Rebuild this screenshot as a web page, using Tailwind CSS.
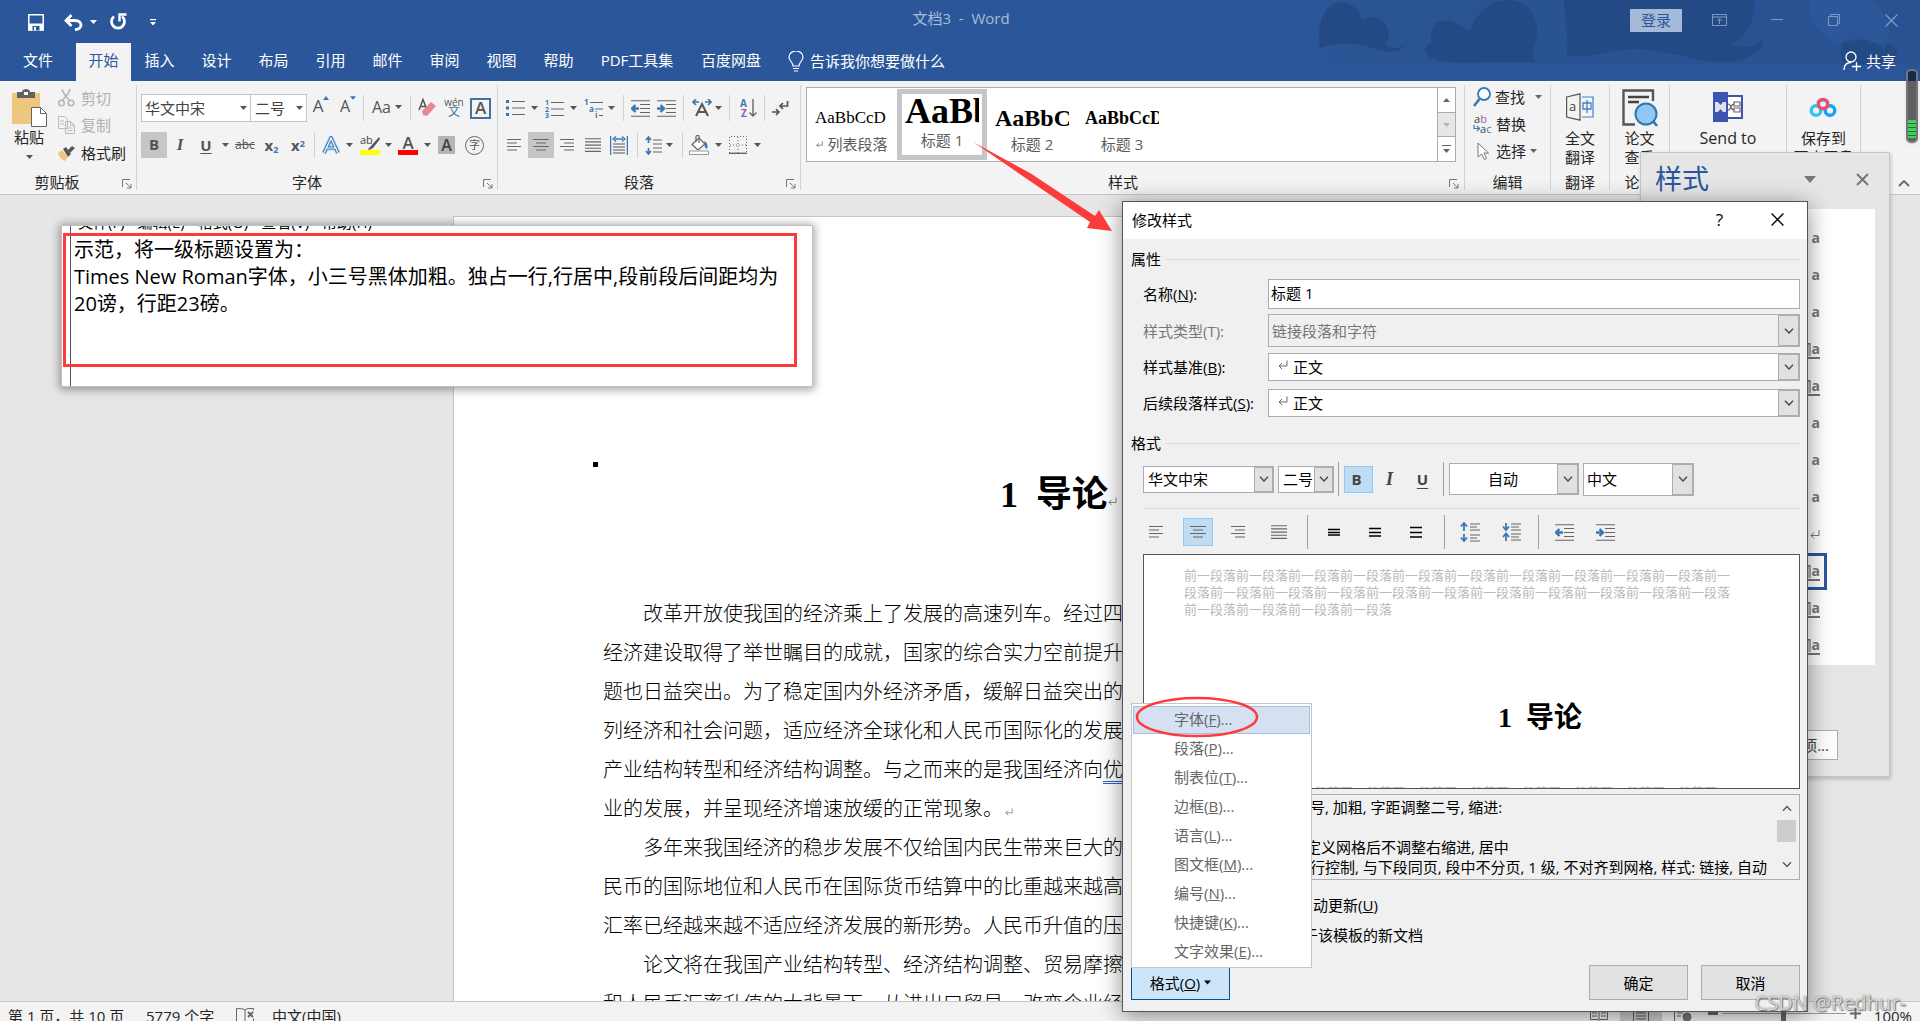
<!DOCTYPE html>
<html lang="zh-CN">
<head>
<meta charset="utf-8">
<title>文档3 - Word</title>
<script src="https://cdn.jsdelivr.net/npm/@tailwindcss/browser@4"></script>
</head>
<body class="relative h-screen overflow-hidden flex flex-col bg-[#e6e6e6] text-[15px] leading-5 text-[#262626] font-['Open_Sans','Noto_Sans_CJK_SC',sans-serif]">

<svg class="hidden">
  <defs>
    <symbol id="caret" viewBox="0 0 7 4"><path d="M0 0h7L3.5 4z" fill="currentColor"/></symbol>
    <symbol id="chev" viewBox="0 0 10 6"><path d="M1 .7 5 5 9 .7" fill="none" stroke="currentColor" stroke-width="1.3"/></symbol>
    <symbol id="launch" viewBox="0 0 10 10"><path d="M.5 8V.5H8M4 4l5 5M9 5v4H5" fill="none" stroke="#777" stroke-width="1"/></symbol>
    <symbol id="close" viewBox="0 0 12 12"><path d="m.5.5 11 11M11.500.5l-11 11" fill="none" stroke="currentColor" stroke-width="1.2"/></symbol>
    <symbol id="left" viewBox="0 0 16 14"><path d="M0 1.500h14M0 5h10M0 8.500h14M0 12h10" stroke="#666" stroke-width="1.2"/></symbol>
    <symbol id="center" viewBox="0 0 16 14"><path d="M0 1.500h16M3 5h10M0 8.500h16M3 12h10" stroke="#666" stroke-width="1.2"/></symbol>
    <symbol id="right" viewBox="0 0 16 14"><path d="M1 1.500h14M5 5h10M1 8.500h14M5 12h10" stroke="#666" stroke-width="1.2"/></symbol>
    <symbol id="justify" viewBox="0 0 16 14"><path d="M0 .7h16M0 3.900h16M0 7.100h16M0 10.300h16M0 13.400h16" stroke="#666" stroke-width="1.1"/></symbol>
    <symbol id="outdent" viewBox="0 0 19 17"><path d="M0 .7h19M9 4.500h10M9 8.500h10M9 12.500h10M0 16.300h19" stroke="#666" stroke-width="1.1"/><path d="M8 8.500H1M4.500 5 1 8.500 4.500 12" fill="none" stroke="#3a78b5" stroke-width="2.4"/></symbol>
    <symbol id="indent" viewBox="0 0 19 17"><path d="M0 .7h19M9 4.500h10M9 8.500h10M9 12.500h10M0 16.300h19" stroke="#666" stroke-width="1.1"/><path d="M0 8.500h7M3.500 5 7 8.500 3.500 12" fill="none" stroke="#3a78b5" stroke-width="2.4"/></symbol>
    <symbol id="ret" viewBox="0 0 10 9"><path d="M9 0v5.500H1M4 2.500l-3 3 3 3" fill="none" stroke="currentColor" stroke-width="1"/></symbol>
  </defs>
</svg>

<!-- Title bar and ribbon tabs -->
<header class="relative shrink-0 h-[81px] bg-[#2b579a] text-white flex flex-col">
  <svg class="absolute right-0 top-0" width="640" height="66" viewBox="0 0 640 66" aria-hidden="true">
    <defs><linearGradient id="fade"><stop offset="0" stop-color="#2a5494" stop-opacity="0"/><stop offset=".12" stop-color="#2a5494"/><stop offset="1" stop-color="#2a5191"/></linearGradient></defs>
    <rect width="640" height="65" fill="url(#fade)"/>
    <g fill="#244a85">
      <path d="M40 48c-4-28 6-44 20-46 14 0 20 10 22 18 10-6 22-2 26 10 2 8-1 12-3 14 8 6 18 4 20 0-2 8-14 10-26 6-20-8-42-8-59-2z"/>
      <path d="M152 42c-6-14 6-26 22-20 8 4 10 8 16 8 6-16 20-30 38-30 22 0 34 22 28 40-4 12-4 18 0 22h-44c-20 0-46 4-64-6-6-6-2-10 4-14z"/>
      <path d="M284 0h190c2 20-8 36-22 44 14 8 28 0 30-6 4 10-12 24-40 24-34 0-70-22-122-8-16 4-26 0-34 2 4-16-2-36-2-56z"/>
      <path d="M561 54c-2-14 8-22 18-22 8 4 8 12 12 12 12-4 26-2 26 10l-4 10h-50z"/>
    </g>
    <path d="M530 0h60c20 14 24 34 14 50-10-14-28-12-44-6-20-8-34-22-30-44z" fill="#2f5c9f" opacity=".6"/>
  </svg>
  <div class="relative h-10 flex items-center pl-7 pr-[22px]">
    <div class="flex flex-1 items-center pt-1">
      <button aria-label="保存" class="w-9"><svg width="16" height="17" viewBox="0 0 16 17" fill="none" stroke="#fff" stroke-width="1.500"><path d="M.8.8h14.400v15.200H.8z"/><path d="M1 9.500h14v7H1z" fill="#fff" stroke="none"/><path d="M4.500 12h7v4.500h-7z" fill="#2b579a" stroke="none"/><path d="M6 13h2v3.500H6z" fill="#fff" stroke="none"/></svg></button>
      <button aria-label="撤消" class="w-[26px]"><svg width="19" height="17" viewBox="0 0 19 17" fill="none" stroke="#fff" stroke-width="2.800"><path d="M2 6.500h9c8 0 8 9 0 9M7.500 1 2 6.500l5.500 5.500"/></svg></button>
      <svg width="7" height="4"><use href="#caret"/></svg>
      <button aria-label="重复" class="ml-3 w-10"><svg width="18" height="18" viewBox="0 0 18 18" fill="none" stroke="#fff" stroke-width="2.800"><path d="M5 3.500a6.500 6.500 0 1 0 8 0"/><path d="M10.500 8.500V1.500h7" stroke-width="2.400"/></svg></button>
      <svg width="8" height="7" viewBox="0 0 8 7"><path d="M1 .6h6" stroke="#fff" stroke-width="1.200"/><path d="M1 3h6L4 6.500z" fill="#fff"/></svg>
    </div>
    <h1 class="text-[#a9bcd9] text-[15px] pb-1 pr-1 whitespace-pre">文档3  -  Word</h1>
    <div class="flex flex-1 items-center justify-end text-[#7d99c6]">
      <button class="w-[52px] h-[23px] bg-[#a5b9d8] text-[#2b579a] rounded-[1px] leading-[22px]">登录</button>
      <button aria-label="功能区显示选项" class="ml-[30px] w-[59px]"><svg width="15" height="12" viewBox="0 0 15 12" fill="none" stroke="currentColor"><path d="M.5.5h14v11H.5zM.5 3h14M7.500 10V5M5 7.200l2.500-2.500L10 7.200"/></svg></button>
      <button aria-label="最小化" class="w-[57px]"><svg width="12" height="12"><path d="M0 5.500h12" stroke="currentColor"/></svg></button>
      <button aria-label="向下还原" class="w-[57px]"><svg width="12" height="12" viewBox="0 0 12 12" fill="none" stroke="currentColor"><path d="M.5 2.500h9v9h-9zM2.500 2.500v-2h9v9h-2"/></svg></button>
      <button aria-label="关闭"><svg width="13" height="13"><use href="#close"/></svg></button>
    </div>
  </div>
  <nav class="relative flex h-[41px] items-end text-center leading-[34px]">
    <a href="#" class="w-[76px] h-[38px]">文件</a>
    <a href="#" class="w-[55px] h-[38px] bg-[#f3f3f3] text-[#2b579a]">开始</a>
    <a href="#" class="w-[57px] h-[38px]">插入</a>
    <a href="#" class="w-[57px] h-[38px]">设计</a>
    <a href="#" class="w-[57px] h-[38px]">布局</a>
    <a href="#" class="w-[57px] h-[38px]">引用</a>
    <a href="#" class="w-[57px] h-[38px]">邮件</a>
    <a href="#" class="w-[57px] h-[38px]">审阅</a>
    <a href="#" class="w-[57px] h-[38px]">视图</a>
    <a href="#" class="w-[57px] h-[38px]">帮助</a>
    <a href="#" class="w-[100px] h-[38px]">PDF工具集</a>
    <a href="#" class="w-[88px] h-[38px]">百度网盘</a>
    <a href="#" class="flex h-[38px] leading-9 pl-[13px]">
      <svg class="mt-2 mr-1.5" width="16" height="21" viewBox="0 0 16 21" fill="none" stroke="#fff" stroke-width="1.200"><path d="M5 15c0-4-4-5-4-9a7 6 0 0 1 14 0c0 4-4 5-4 9zM5 17.500h6M6 20h4"/></svg>告诉我你想要做什么</a>
    <a href="#" class="ml-auto mr-6 flex h-[38px] leading-9"><svg class="mt-2 mr-1" width="19" height="20" viewBox="0 0 19 20" fill="none" stroke="#fff" stroke-width="1.300"><circle cx="8" cy="6" r="5"/><path d="M1 19c0-5 2-7.500 7-7.500M13.500 11v9M9 15.500h9"/></svg>共享</a>
  </nav>
</header>

<!-- Ribbon -->
<section class="shrink-0 h-[114px] bg-[#f3f3f3] border-b border-[#c8c8c8] py-1 flex">
  <!-- Clipboard -->
  <div class="w-[137px] border-r border-[#d2d2d2] flex flex-col">
    <div class="flex flex-1">
      <button class="w-[58px] flex flex-col items-center pt-1">
        <svg width="35" height="38" viewBox="0 0 35 38"><path d="M0 4h28v31H0z" fill="#eec77f"/><path d="M5 3h5c0-4 8-4 8 0h5v6H5z" fill="#636363"/><path d="M12 3h4v3h-4z" fill="#fff"/><path d="M19.500 18.500h9l6 6v13h-15z" fill="#fff" stroke="#666"/><path d="M28.500 18.500v6h6" fill="none" stroke="#666"/></svg>
        <span>粘贴</span>
        <svg class="mt-2 text-[#555]" width="7" height="4"><use href="#caret"/></svg>
      </button>
      <div class="flex flex-col text-[#b1b1b1] leading-6">
        <button class="flex h-[26px] items-center pb-px"><svg class="mr-1.5" width="17" height="18" viewBox="0 0 17 18" fill="none" stroke="#b5b5b5" stroke-width="1.600"><path d="M4 0c1 5 5 8 8 12M12 0c-1 5-5 8-8 12"/><circle cx="3.500" cy="14" r="2.800"/><circle cx="13" cy="14" r="2.800"/></svg>剪切</button>
        <button class="flex h-7 items-center"><svg class="mr-1.5" width="17" height="18" viewBox="0 0 17 18" fill="#f3f3f3" stroke="#bbb"><path d="M.5.5h6l3 3v9h-9zM7.500 5.500h5l4 4v8h-9zM12.500 5.500v4h4M2 5h4M2 8h4M9.500 12h5M9.500 14.500h5"/></svg>复制</button>
        <button class="flex h-7 items-center text-[#262626]"><svg class="mr-1.5" width="17" height="16" viewBox="0 0 17 16"><path d="M0 8l4-3 6 7-3 4c-3-1-6-4-7-8z" fill="#eec77f"/><path d="M5 4l3-2 5 7-3 3z" fill="#555"/><path d="M10 5l4-4 3 2-5 5z" fill="#555"/></svg>格式刷</button>
      </div>
    </div>
    <div class="relative h-4 leading-4 pr-[22px] text-center">剪贴板<svg class="absolute right-1 top-[5px]" width="10" height="10"><use href="#launch"/></svg></div>
  </div>

  <!-- Font -->
  <div class="w-[361px] border-r border-[#d2d2d2] flex flex-col pl-1 pt-[9px] text-[#555]">
    <div class="flex h-7 items-center">
      <label class="relative w-[110px] h-7 block"><select aria-label="字体" class="appearance-none w-full h-full border border-[#c6c6c6] bg-white pl-[3px] text-[#444] leading-6"><option>华文中宋</option></select><svg class="absolute right-1 top-3 pointer-events-none" width="7" height="4"><use href="#caret"/></svg></label>
      <label class="relative w-14 h-7 block"><select aria-label="字号" class="appearance-none w-full h-full border border-l-0 border-[#c6c6c6] bg-white pl-1 text-[#444] leading-6"><option>二号</option></select><svg class="absolute right-1 top-3 pointer-events-none" width="7" height="4"><use href="#caret"/></svg></label>
      <button class="w-7 flex justify-center text-[17px] pb-1">A<svg width="6" height="4" viewBox="0 0 6 4"><path d="M0 4h6L3 0z" fill="#3a78b5"/></svg></button>
      <button class="w-[26px] flex justify-center text-[16px] pb-1">A<svg width="6" height="4"><use href="#caret" color="#3a78b5"/></svg></button>
      <span class="w-px h-[26px] ml-0.5 bg-[#d2d2d2]"></span>
      <button class="w-[46px] flex justify-center items-center gap-1 text-[16px] pb-0.5">Aa<svg width="7" height="4"><use href="#caret"/></svg></button>
      <span class="w-px h-[26px] mr-[7px] bg-[#d2d2d2]"></span>
      <button aria-label="清除格式" class="w-6"><svg width="19" height="20" viewBox="0 0 19 20"><path d="M1 12 5 1.500 9 12M2.500 8.500h5" fill="none" stroke="#555" stroke-width="1.500"/><path d="M4 13 13 4l5 4-9 10-4-1z" fill="#e88594"/></svg></button>
      <button class="w-6 flex flex-col items-center text-[10px] leading-[8px]">wén<span class="text-[12px] leading-3 text-[#3a78b5]">文</span></button>
      <button class="ml-1 w-[21px] h-[21px] border-2 border-[#44729f] text-[17px] leading-[16px] font-semibold">A</button>
    </div>
    <div class="flex h-[26px] mt-2.5 items-center">
      <button class="w-[26px] h-full bg-[#c6c6c6] font-bold leading-6 pb-0.5">B</button>
      <button class="w-[26px] italic font-bold text-[17px] font-['Liberation_Serif']">I</button>
      <button class="w-[26px] font-bold underline underline-offset-2">U</button>
      <svg class="mx-[3px]" width="7" height="4"><use href="#caret"/></svg>
      <button class="w-[26px] line-through text-[12px]">abc</button>
      <button class="w-[27px] font-bold">x<sub class="text-[9px] text-[#3a78b5]">2</sub></button>
      <button class="w-[26px] font-bold">x<sup class="text-[9px] text-[#3a78b5]">2</sup></button>
      <span class="w-px h-[26px] ml-[3px] mr-[3px] bg-[#d2d2d2]"></span>
      <button aria-label="文本效果" class="w-[26px] flex justify-center"><svg width="18" height="19" viewBox="0 0 18 19" fill="none"><path d="M2 17 9 2l7 15M5 12h8" stroke="#a9cdf0" stroke-width="5"/><path d="M2 17 9 2l7 15M5 12h8" stroke="#3a78b5" stroke-width="3.200"/><path d="M2 17 9 2l7 15M5 12h8" stroke="#fff" stroke-width="1.200"/></svg></button>
      <svg class="ml-0.5 mr-1" width="7" height="4"><use href="#caret"/></svg>
      <button aria-label="突出显示" class="w-[25px] flex justify-center"><svg width="20" height="20" viewBox="0 0 20 20"><text x="0" y="9" font-size="11" fill="#444">ab</text><path d="m19 2-8 9-3 3 1 1 4-2 7-9z" fill="#555"/><path d="M0 15h20v5H0z" fill="#ff0"/></svg></button>
      <svg class="mx-[3px]" width="7" height="4"><use href="#caret"/></svg>
      <button class="w-[26px] flex flex-col items-center text-[17px] leading-[15px] font-semibold">A<span class="w-5 h-[5px] bg-[#f00]"></span></button>
      <svg class="mx-[3px]" width="7" height="4"><use href="#caret"/></svg>
      <button class="ml-1 w-[17px] h-[18px] bg-[#b5b5b5] text-[16px] leading-4 font-semibold text-[#444]">A</button>
      <button class="ml-2.5 w-[19px] h-[19px] rounded-full border border-[#666] text-[11px] leading-4">字</button>
    </div>
    <div class="relative mt-auto h-4 leading-4 pr-6 text-center text-[#262626]">字体<svg class="absolute right-1 top-[5px]" width="10" height="10"><use href="#launch"/></svg></div>
  </div>

  <!-- Paragraph -->
  <div class="w-[303px] border-r border-[#d2d2d2] flex flex-col pl-1 pt-[9px] text-[#555]">
    <div class="flex h-7 items-center">
      <button aria-label="项目符号" class="w-[26px] flex justify-center"><svg width="19" height="18" viewBox="0 0 19 18"><path d="M0 1h3v3H0zM0 7.500h3v3H0zM0 14h3v3H0z" fill="#3a78b5"/><path d="M6 2.500h13M6 9h13M6 15.500h13" stroke="#666" stroke-width="1.200"/></svg></button>
      <svg class="mx-[3px]" width="7" height="4"><use href="#caret"/></svg>
      <button aria-label="编号" class="w-[26px] flex justify-center"><svg width="19" height="19" viewBox="0 0 19 19"><g font-size="7" font-weight="bold" fill="#3a78b5"><text y="6">1</text><text y="12.500">2</text><text y="19">3</text></g><path d="M6 3.500h13M6 10h13M6 16.500h13" stroke="#666" stroke-width="1.200"/></svg></button>
      <svg class="mx-[3px]" width="7" height="4"><use href="#caret"/></svg>
      <button aria-label="多级列表" class="w-[26px] flex justify-center"><svg width="19" height="19" viewBox="0 0 19 19"><g font-size="8" font-weight="bold" fill="#3a78b5"><text y="6">1</text><text x="5" y="12.500">a</text><text x="11" y="19">i</text></g><path d="M6 3.500h13M11 10h8M15 16.500h4" stroke="#666" stroke-width="1.200"/></svg></button>
      <svg class="ml-0.5" width="7" height="4"><use href="#caret"/></svg>
      <span class="w-px h-[26px] ml-2 mr-[3px] bg-[#d2d2d2]"></span>
      <button aria-label="减少缩进" class="w-[26px] flex justify-center"><svg width="19" height="17"><use href="#outdent"/></svg></button>
      <button aria-label="增加缩进" class="w-[26px] flex justify-center"><svg width="19" height="17"><use href="#indent"/></svg></button>
      <span class="w-px h-[26px] ml-1 mr-[5px] bg-[#d2d2d2]"></span>
      <button aria-label="中文版式" class="w-[26px] flex justify-center"><svg width="20" height="18" viewBox="0 0 20 18" fill="none"><path d="M4 17 10 5l6 12M6.500 13h7" stroke="#555" stroke-width="2"/><path d="M7 3H1M4 0 1 3l3 3M13 3h6M16 0l3 3-3 3" stroke="#3a78b5" stroke-width="1.600"/></svg></button>
      <svg width="7" height="4"><use href="#caret"/></svg>
      <span class="w-px h-[26px] ml-[7px] mr-[5px] bg-[#d2d2d2]"></span>
      <button aria-label="排序" class="w-[26px] flex justify-center"><svg width="17" height="20" viewBox="0 0 17 20"><g font-size="10" font-weight="bold"><text x="0" y="9" fill="#3a78b5">A</text><text x="1" y="19" fill="#9160ad">Z</text></g><path d="M13 1v17M9.500 14.500 13 18l3.500-3.500" fill="none" stroke="#666" stroke-width="1.400"/></svg></button>
      <span class="w-px h-[26px] ml-[3px] mr-0.5 bg-[#d2d2d2]"></span>
      <button aria-label="显示编辑标记" class="w-[26px] flex justify-center"><svg width="17" height="15" viewBox="0 0 17 15" fill="none" stroke="#555" stroke-width="1.700"><path d="M15.500 0v5H8M11 2 8 5l3 3M0 11h7M4 8l3 3-3 3"/></svg></button>
    </div>
    <div class="flex h-[26px] mt-2.5 items-center">
      <button aria-label="左对齐" class="w-[26px] h-full flex items-center justify-center"><svg width="16" height="14"><use href="#left"/></svg></button>
      <button aria-label="居中" class="w-[26px] h-full flex items-center justify-center bg-[#c6c6c6]"><svg width="16" height="14"><use href="#center"/></svg></button>
      <button aria-label="右对齐" class="w-[26px] h-full flex items-center justify-center"><svg width="16" height="14"><use href="#right"/></svg></button>
      <button aria-label="两端对齐" class="w-[26px] h-full flex items-center justify-center"><svg width="16" height="14"><use href="#justify"/></svg></button>
      <button aria-label="分散对齐" class="w-[26px] h-full flex items-center justify-center"><svg width="18" height="19" viewBox="0 0 18 19" fill="none"><path d="M.6 0v19M17.400 0v19M5 3h8M6 .5 3 3l3 2.500M12 .5 15 3l-3 2.500" stroke="#3a78b5" stroke-width="1.300"/><path d="M3 8h12M3 11h12M3 14h12M3 17h12" stroke="#555" stroke-width="1.200"/></svg></button>
      <span class="w-px h-[26px] ml-[5px] mr-0.5 bg-[#d2d2d2]"></span>
      <button aria-label="行距" class="w-[26px] flex justify-center"><svg width="17" height="19" viewBox="0 0 17 19" fill="none"><path d="M3.500 1v6M1 4l2.500-3L6 4M3.500 18v-6M1 15l2.500 3L6 15" stroke="#3a78b5" stroke-width="1.700"/><path d="M8 4h9M8 8h9M8 12h9M8 16h9" stroke="#666" stroke-width="1.200"/></svg></button>
      <svg width="7" height="4"><use href="#caret"/></svg>
      <span class="w-px h-[26px] ml-[9px] mr-[3px] bg-[#d2d2d2]"></span>
      <button aria-label="底纹" class="w-[26px] flex justify-center"><svg width="20" height="20" viewBox="0 0 20 20" fill="none"><path d="M3 9.500 10 3l6 6-7 6z" fill="#fff" stroke="#666" stroke-width="1.200"/><path d="M7 7V1.500c0-1.500 3-1.500 3 0V8" stroke="#666" stroke-width="1.200"/><path d="M15 6c4 2 4 5 3 8-2-1-3-3-2-5z" fill="#3a78b5"/><path d="M.5 16h19v3.500H.5z" fill="#fff" stroke="#999"/></svg></button>
      <svg class="mx-[3px]" width="7" height="4"><use href="#caret"/></svg>
      <button aria-label="边框" class="w-[26px] flex justify-center"><svg width="18" height="18" viewBox="0 0 18 18" fill="none" stroke="#666"><path d="M.5 17V.5h17V17M9 1v16M1 9h16" stroke-dasharray="1 2"/><path d="M0 17.300h18" stroke-width="1.400"/></svg></button>
      <svg class="mx-[3px]" width="7" height="4"><use href="#caret"/></svg>
    </div>
    <div class="relative mt-auto h-4 leading-4 pr-6 text-center text-[#262626]">段落<svg class="absolute right-1 top-[5px]" width="10" height="10"><use href="#launch"/></svg></div>
  </div>

  <!-- Styles gallery -->
  <div class="flex-1 border-r border-[#d2d2d2] flex flex-col pl-[5px] pr-2 pt-0.5">
    <div class="h-[75px] border border-[#ababab] bg-white flex">
      <div class="flex flex-1 items-stretch pt-px text-[#5c5c5c] text-center">
        <button class="w-[90px] px-2 h-[71px] flex flex-col justify-end pb-1.5"><span class="w-full overflow-hidden whitespace-nowrap text-left text-[17px] leading-7 text-black font-['Liberation_Serif']">AaBbCcD</span><span class="w-full mt-0.5 flex items-center justify-center gap-1"><svg width="7" height="7"><use href="#ret"/></svg>列表段落</span></button>
        <button class="w-[90px] h-[71px] border-5 border-[#c6c6c6] flex flex-col px-[3px]"><span class="w-full overflow-hidden whitespace-nowrap text-left text-[36px] leading-[34px] text-black font-bold font-['Liberation_Serif']">AaBbC</span><span class="w-full mt-0.5">标题 1</span></button>
        <button class="w-[90px] px-2 h-[71px] flex flex-col justify-end pb-1.5"><span class="w-full overflow-hidden whitespace-nowrap text-left text-[24px] leading-7 text-black font-bold font-['Liberation_Serif']">AaBbCc</span><span class="w-full mt-0.5">标题 2</span></button>
        <button class="w-[90px] px-2 h-[71px] flex flex-col justify-end pb-1.5"><span class="w-full overflow-hidden whitespace-nowrap text-left text-[18px] leading-7 text-black font-bold font-['Liberation_Serif']">AaBbCcD</span><span class="w-full mt-0.5">标题 3</span></button>
      </div>
      <div class="w-[18px] border-l border-[#ababab] flex flex-col text-[#666]">
        <button aria-label="上一行" class="flex-1 flex items-center justify-center"><svg class="rotate-180" width="7" height="4"><use href="#caret"/></svg></button>
        <button aria-label="下一行" class="flex-1 flex items-center justify-center bg-[#e6e6e6] border-y border-[#ababab] text-[#b5b5b5]"><svg width="7" height="4"><use href="#caret"/></svg></button>
        <button aria-label="其他" class="flex-1 flex flex-col items-center justify-center gap-[3px]"><span class="w-[9px] h-px bg-[#666]"></span><svg width="7" height="4"><use href="#caret"/></svg></button>
      </div>
    </div>
    <div class="relative mt-auto h-4 leading-4 pr-4 text-center">样式<svg class="absolute right-[-3px] top-[5px]" width="10" height="10"><use href="#launch"/></svg></div>
  </div>

  <!-- Editing -->
  <div class="w-[86px] border-r border-[#d2d2d2] flex flex-col pl-2">
    <button class="flex h-[25px] items-center pb-px"><svg class="mr-1" width="18" height="20" viewBox="0 0 18 20" fill="none" stroke="#3a78b5"><circle cx="11" cy="7" r="6" stroke-width="1.800" fill="#fff"/><path d="M6.500 12 1 19" stroke-width="2.600"/></svg>查找<svg class="ml-2.5 text-[#666]" width="7" height="4"><use href="#caret"/></svg></button>
    <button class="flex h-7 items-center"><svg class="mr-1" width="19" height="20" viewBox="0 0 19 20" font-size="11"><text x="1" y="9" fill="#444">a<tspan fill="#9160ad">b</tspan></text><text x="7" y="19" fill="#444">a<tspan fill="#3a78b5">c</tspan></text><path d="M1 11v3.500h5M4 12l2.500 2.500L4 17" fill="none" stroke="#3a78b5" stroke-width="1.200"/></svg>替换</button>
    <button class="flex h-[26px] items-center"><svg class="ml-1 mr-1.5" width="13" height="18" viewBox="0 0 13 18"><path d="M1 1v14l3.500-3 3 5.500 2-1-2.500-5.500h4.500z" fill="#fff" stroke="#777"/></svg>选择<svg class="ml-1 text-[#666]" width="7" height="4"><use href="#caret"/></svg></button>
    <div class="mt-auto h-4 leading-4 pr-2 text-center">编辑</div>
  </div>

  <!-- Translate -->
  <div class="w-[59px] border-r border-[#d2d2d2] flex flex-col items-center">
    <button class="flex flex-col items-center pt-2 leading-[19px]"><svg class="mb-2" width="28" height="28" viewBox="0 0 28 28" fill="none"><path d="M.6 4 14 .8v26.400L.6 24z" stroke="#555" stroke-width="1.200"/><text x="3" y="18" font-size="13" fill="#444">a</text><path d="M16 4h11v20H16" stroke="#3f80d0" stroke-width="1.200"/><path d="M17 10h8v6h-8zM21 7v13" stroke="#3f80d0" stroke-width="1.300"/></svg>全文<span>翻译</span></button>
    <div class="mt-auto h-4 leading-4">翻译</div>
  </div>

  <!-- Paper check -->
  <div class="w-[60px] border-r border-[#d2d2d2] flex flex-col items-center">
    <button class="flex flex-col items-center pt-1 leading-[19px]"><svg class="mb-0.5" width="36" height="38" viewBox="0 0 36 38" fill="none"><path d="M31 12V1.500H1.500v34H13" stroke="#555" stroke-width="2.400"/><path d="M6 8h21M6 13h11" stroke="#444" stroke-width="2.600"/><circle cx="24" cy="25" r="10.500" fill="#93c6f4" stroke="#287aa8" stroke-width="2"/><path d="m31 32 4 5" stroke="#287aa8" stroke-width="2.600"/></svg>论文<span>查重</span></button>
    <div class="mt-auto h-4 leading-4">论文</div>
  </div>

  <!-- Send to -->
  <div class="w-[117px] border-r border-[#d2d2d2] flex flex-col items-center">
    <button class="flex flex-col items-center pt-[7px] leading-[19px]"><svg class="mb-[7px]" width="30" height="30" viewBox="0 0 30 30" fill="none"><path d="M14 4h15v22H14z" fill="#fff" stroke="#3d55b0" stroke-width="2"/><path d="M0 0h15v30H0z" fill="#3d55b0"/><path d="M2 10h3l2.500 3L10 10h3v10h-3l-2.500-3L5 20H2z" fill="#dfe2ee"/><path d="M15 12c4 0 2 6 6 6M15 18c4 0 2-6 6-6M21 10h6v4h-6zM21 16h6v4h-6z" stroke="#666" stroke-width="1.200"/></svg><span class="text-[16px]">Send to</span><span>iMindMap</span></button>
  </div>

  <!-- Cloud drive -->
  <div class="w-[74px] border-r border-[#d2d2d2] flex flex-col items-center">
    <button class="flex flex-col items-center pt-[11px] leading-[19px]"><svg class="mb-3" width="28" height="21" viewBox="0 0 28 21" fill="none" stroke-width="3.400"><circle cx="7" cy="14.500" r="4.800" stroke="#2bc4f5"/><circle cx="21" cy="14.500" r="4.800" stroke="#12a4f8"/><path d="M9 7a5.500 5.500 0 0 1 10 0" stroke="#2bbdf5"/><circle cx="14" cy="8" r="4.600" stroke="#f24d6c"/></svg>保存到<span>百度网盘</span></button>
  </div>
  <div class="w-[59px] flex items-end pl-[37px] pb-[3px]"><button aria-label="折叠功能区"><svg class="rotate-180 text-[#666]" width="12" height="8" viewBox="0 0 12 8"><path d="m1 1 5 5 5-5" fill="none" stroke="currentColor" stroke-width="1.800"/></svg></button></div>
</section>

<!-- Document -->
<main class="flex-1 min-h-0 overflow-hidden pt-[21px] px-[453px]">
  <article class="h-[1400px] bg-white border border-[#c6c6c6] pl-[149px] pt-[245px] text-black">
    <div class="w-[5px] h-[5px] -ml-2.5 bg-black"></div>
    <h2 class="mt-2 pl-[397px] flex items-center text-[36px] leading-10 font-bold whitespace-pre font-['Liberation_Serif','Noto_Sans_CJK_SC',serif]">1  导论<svg class="mt-3 text-[#777]" width="9" height="9"><use href="#ret"/></svg></h2>
    <div class="mt-20 text-[20px] leading-[39px] whitespace-nowrap overflow-hidden font-light font-['Liberation_Serif','Noto_Sans_CJK_SC',serif]">
      <p><span class="block indent-10">改革开放使我国的经济乘上了发展的高速列车。经过四十多年</span><span class="block">经济建设取得了举世瞩目的成就，国家的综合实力空前提升，问</span><span class="block">题也日益突出。为了稳定国内外经济矛盾，缓解日益突出的贸易</span><span class="block">列经济和社会问题，适应经济全球化和人民币国际化的发展本国</span><span class="block">产业结构转型和经济结构调整。与之而来的是我国经济向<span class="underline decoration-double decoration-1 decoration-[#2f5fd0] underline-offset-4">优质</span>产</span><span class="flex items-center">业的发展，并呈现经济增速放缓的正常现象。<svg class="mt-1 ml-0.5 text-[#777]" width="8" height="8"><use href="#ret"/></svg></span></p>
      <p><span class="block indent-10">多年来我国经济的稳步发展不仅给国内民生带来巨大的变化</span><span class="block">民币的国际地位和人民币在国际货币结算中的比重越来越高，其</span><span class="block">汇率已经越来越不适应经济发展的新形势。人民币升值的压力</span></p>
      <p><span class="block indent-10">论文将在我国产业结构转型、经济结构调整、贸易摩擦加剧</span><span class="block">和人民币汇率升值的大背景下，从进出口贸易、改变企业经营</span></p>
    </div>
  </article>
</main>

<!-- Status bar -->
<footer class="relative shrink-0 h-5 overflow-hidden bg-[#f3f3f3] border-t border-[#c6c6c6] flex justify-between pt-1 px-2">
  <div class="flex whitespace-pre"><span class="w-[138px]">第 1 页，共 10 页</span><span class="w-[90px]">5779 个字</span><svg class="mt-0.5 mr-[18px]" width="18" height="15" viewBox="0 0 18 15" fill="none" stroke="#666"><path d="M9 2C7 .5 3 .5.500.500v13H8l1 1 1-1h7.500v-3M9 2v12M9 2c1-1 3-1.500 4-1.500h4.500v2"/><path d="m12 4 5 5M17 4l-5 5" stroke-width="1.800"/></svg><span>中文(中国)</span></div>
  <div class="flex items-start">
    <svg width="18" height="15" viewBox="0 0 18 15" fill="none" stroke="#666"><path d="M.5.500H8l1 1 1-1h7.500v13H10l-1 1-1-1H.5zM9 2v12M2 4h5M2 7h5M2 10h5M11 4h5M11 7h5M11 10h5"/></svg>
    <span class="ml-3 -mt-1 w-[42px] h-5 bg-[#cdcdcd] flex justify-center pt-1"><svg width="16" height="16" viewBox="0 0 16 16" fill="none" stroke="#555"><path d="M.5.500h15v15H.5zM3 4h10M3 7h10M3 10h10M3 13h10"/></svg></span>
    <svg class="ml-3 mr-4" width="18" height="16" viewBox="0 0 18 16" fill="none" stroke="#666"><path d="M13 5V.500H.500v15H8M3 4h8M3 7h6M3 10h4"/><circle cx="13" cy="11" r="4" fill="#777"/></svg>
    <span class="mt-[6px] w-2.5 h-[3px] bg-[#666]"></span>
    <input type="range" aria-label="缩放" class="appearance-none ml-1 mr-1 mt-[7px] w-[124px] h-px bg-[#999] [&::-webkit-slider-thumb]:appearance-none [&::-webkit-slider-thumb]:w-[5px] [&::-webkit-slider-thumb]:h-[15px] [&::-webkit-slider-thumb]:bg-[#666]">
    <svg class="mt-0.5 mr-[13px]" width="11" height="11"><path d="M5.500 0v11M0 5.500h11" stroke="#666" stroke-width="2"/></svg>
    <span>100%</span>
  </div>
</footer>

<!-- Floating note window -->
<section class="absolute left-[61px] top-[225px] w-[752px] h-[162px] bg-white border border-[#c0c0c0] rounded-[2px] shadow-[0_1px_8px_2px_rgba(0,0,0,.35)] overflow-hidden pl-2">
  <div class="h-full border-l border-[#555] text-black">
    <div class="h-1.5 overflow-hidden"><div class="-mt-3.5 pl-[7px] flex gap-[13px] text-[15px] leading-5"><span>文件(F)</span><span>编辑(E)</span><span>格式(O)</span><span>查看(V)</span><span>帮助(H)</span></div></div>
    <p class="pt-1 pl-[3px] text-[20px] leading-[27px] whitespace-nowrap">示范，将一级标题设置为：<br>Times New Roman字体，小三号黑体加粗。独占一行,行居中,段前段后间距均为<br>20谤，行距23磅。</p>
  </div>
  <div class="absolute left-px top-[7px] w-[734px] h-[134px] border-3 border-[#fc3b3b]"></div>
</section>

<!-- Styles pane -->
<aside class="absolute right-[30px] top-[152px] w-[250px] h-[625px] bg-[#e6e6e6] border border-[#c6c6c6] shadow-[1px_2px_4px_rgba(0,0,0,.2)] flex flex-col">
  <div class="h-14 flex items-center pl-[14px] pr-5 pb-1 text-[#777]">
    <h2 class="flex-1 text-[27px] leading-10 text-[#2b579a]">样式</h2>
    <svg class="mr-10" width="12" height="7" viewBox="0 0 12 7"><path d="M0 0h12L6 7z" fill="#777"/></svg>
    <button aria-label="关闭窗格"><svg width="13" height="13" viewBox="0 0 13 13"><path d="m1 1 11 11M12 1 1 12" stroke="#777" stroke-width="2"/></svg></button>
  </div>
  <ul class="ml-[14px] mr-3.5 h-[456px] bg-white pt-[11px] text-[14px] font-bold text-[#777]">
    <li class="h-[37px] leading-[35px] pr-[55px] text-right">a</li>
    <li class="h-[37px] leading-[35px] pr-[55px] text-right">a</li>
    <li class="h-[37px] leading-[35px] pr-[55px] text-right">a</li>
    <li class="h-[37px] leading-[35px] pr-[55px] text-right"><span class="underline underline-offset-3 decoration-2">¶a</span></li>
    <li class="h-[37px] leading-[35px] pr-[55px] text-right"><span class="underline underline-offset-3 decoration-2">¶a</span></li>
    <li class="h-[37px] leading-[35px] pr-[55px] text-right">a</li>
    <li class="h-[37px] leading-[35px] pr-[55px] text-right">a</li>
    <li class="h-[37px] leading-[35px] pr-[55px] text-right">a</li>
    <li class="h-[37px] pr-[55px] flex justify-end items-center"><svg width="10" height="9"><use href="#ret"/></svg></li>
    <li class="h-[37px] mr-[48px] border-3 border-[#2b579a] leading-[29px] pr-1 text-right"><span class="underline underline-offset-3 decoration-2">¶a</span></li>
    <li class="h-[37px] leading-[35px] pr-[55px] text-right"><span class="underline underline-offset-3 decoration-2">¶a</span></li>
    <li class="h-[37px] leading-[35px] pr-[55px] text-right"><span class="underline underline-offset-3 decoration-2">¶a</span></li>
  </ul>
  <button class="mt-[65px] ml-auto mr-[51px] w-20 h-[30px] bg-[#fdfdfd] border border-[#ababab] text-right pr-2 leading-6 text-[#444]">选项...</button>
</aside>

<!-- Modify style dialog -->
<form class="absolute right-[112px] top-[201px] w-[686px] h-[811px] bg-[#f0f0f0] border border-[#555] shadow-[0_4px_22px_rgba(0,0,0,.45)] text-black flex flex-col">
  <div class="h-[37px] bg-white flex items-center pl-[9px] pr-[23px] pb-0.5">
    <h2 class="flex-1">修改样式</h2>
    <button type="button" aria-label="帮助" class="mr-12 text-[17px]">?</button>
    <button type="button" aria-label="关闭"><svg width="13" height="13"><use href="#close"/></svg></button>
  </div>
  <div class="flex-1 flex flex-col pl-2 pr-[7px]">
    <div class="mt-[10px] flex h-5 items-center gap-1">属性<span class="flex-1 h-px bg-[#dadada]"></span></div>
    <div class="mt-2.5 pl-3 grid grid-cols-[125px_1fr] items-center">
      <label for="nm">名称(<u>N</u>):</label><input id="nm" value="标题 1" class="h-[30px] border border-[#abadb3] bg-white pl-0.5 pb-1">
      <label for="ty" class="mt-[5px] text-[#767676]">样式类型(T):</label><div class="relative mt-[5px]"><select id="ty" disabled class="appearance-none opacity-100 block w-full h-[33px] border border-[#abadb3] bg-[#f0f0f0] pl-[3px] text-[#767676]"><option>链接段落和字符</option></select><span class="absolute right-px top-px bottom-px w-[21px] border border-[#abadb3] bg-[#e1e1e1] grid place-items-center pointer-events-none text-[#444]"><svg width="10" height="6"><use href="#chev"/></svg></span></div>
      <label for="bs" class="mt-1.5">样式基准(<u>B</u>):</label><div class="relative mt-1.5"><select id="bs" class="appearance-none block w-full h-[28px] border border-[#abadb3] bg-white pl-6"><option>正文</option></select><svg class="absolute left-2.5 top-[7px] text-[#666]" width="10" height="10"><use href="#ret"/></svg><span class="absolute right-px top-px bottom-px w-[21px] border border-[#abadb3] bg-[#e1e1e1] grid place-items-center pointer-events-none text-[#444]"><svg width="10" height="6"><use href="#chev"/></svg></span></div>
      <label for="nx" class="mt-2">后续段落样式(<u>S</u>):</label><div class="relative mt-2"><select id="nx" class="appearance-none block w-full h-[28px] border border-[#abadb3] bg-white pl-6"><option>正文</option></select><svg class="absolute left-2.5 top-[7px] text-[#666]" width="10" height="10"><use href="#ret"/></svg><span class="absolute right-px top-px bottom-px w-[21px] border border-[#abadb3] bg-[#e1e1e1] grid place-items-center pointer-events-none text-[#444]"><svg width="10" height="6"><use href="#chev"/></svg></span></div>
    </div>
    <div class="mt-4 flex h-5 items-center gap-1">格式<span class="flex-1 h-px bg-[#dadada]"></span></div>
    <div class="mt-[9px] pl-3 flex h-[34px] items-center text-[#444]">
      <div class="relative w-[131px]"><select aria-label="字体" class="appearance-none block w-full h-[27px] border border-[#abadb3] bg-white pl-1 text-black"><option>华文中宋</option></select><span class="absolute right-px top-px bottom-px w-[19px] border border-[#abadb3] bg-[#e1e1e1] grid place-items-center pointer-events-none"><svg width="10" height="6"><use href="#chev"/></svg></span></div>
      <div class="relative w-14 ml-1"><select aria-label="字号" class="appearance-none block w-full h-[27px] border border-[#abadb3] bg-white pl-1 text-black"><option>二号</option></select><span class="absolute right-px top-px bottom-px w-[19px] border border-[#abadb3] bg-[#e1e1e1] grid place-items-center pointer-events-none"><svg width="10" height="6"><use href="#chev"/></svg></span></div>
      <span class="ml-1 w-px h-full bg-[#a0a0a0]"></span>
      <button type="button" class="ml-[5px] w-[29px] h-[27px] bg-[#c0dcf3] border border-[#90c8f6] font-bold pr-1">B</button>
      <button type="button" class="w-[33px] font-bold italic text-[18px] font-['Liberation_Serif']">I</button>
      <button type="button" class="w-[33px] font-bold underline underline-offset-3">U</button>
      <span class="ml-1 w-px h-full bg-[#a0a0a0]"></span>
      <div class="relative w-[130px] ml-[5px]"><select aria-label="字体颜色" class="appearance-none block w-full h-[32px] border border-[#abadb3] bg-white pl-[38px] text-black"><option>自动</option></select><span class="absolute right-px top-px bottom-px w-[21px] border border-[#abadb3] bg-[#e1e1e1] grid place-items-center pointer-events-none"><svg width="10" height="6"><use href="#chev"/></svg></span></div>
      <div class="relative w-[111px] ml-1"><select aria-label="文字类型" class="appearance-none block w-full h-[33px] border border-[#abadb3] bg-white pl-[3px] text-black"><option>中文</option></select><span class="absolute right-px top-px bottom-px w-[21px] border border-[#abadb3] bg-[#e1e1e1] grid place-items-center pointer-events-none"><svg width="10" height="6"><use href="#chev"/></svg></span></div>
    </div>
    <div class="mt-3 ml-3 h-px bg-[#dadada]"></div>
    <div class="mt-1.5 pl-3 flex h-[34px] items-center">
      <button type="button" aria-label="左对齐" class="w-[28px] flex justify-center"><svg width="16" height="14"><use href="#left"/></svg></button>
      <button type="button" aria-label="居中" class="ml-3 w-[30px] h-7 grid place-items-center bg-[#c0dcf3] border border-[#90c8f6]"><svg width="16" height="14"><use href="#center"/></svg></button>
      <button type="button" aria-label="右对齐" class="ml-[10px] w-[30px] flex justify-center"><svg width="16" height="14"><use href="#right"/></svg></button>
      <button type="button" aria-label="两端对齐" class="ml-[11px] w-[30px] flex justify-center"><svg width="16" height="14"><use href="#justify"/></svg></button>
      <span class="ml-[13px] w-px h-full bg-[#a0a0a0]"></span>
      <button type="button" aria-label="单倍行距" class="ml-[6px] w-10 flex justify-center"><svg width="12" height="14"><path d="M0 4.500h12M0 7.500h12M0 10h12" stroke="#000" stroke-width="1.300"/></svg></button>
      <button type="button" aria-label="1.5 倍行距" class="w-[42px] flex justify-center"><svg width="12" height="14"><path d="M0 3.500h12M0 7.500h12M0 11h12" stroke="#000" stroke-width="1.300"/></svg></button>
      <button type="button" aria-label="双倍行距" class="w-10 flex justify-center"><svg width="12" height="14"><path d="M0 2.500h12M0 7.500h12M0 12h12" stroke="#000" stroke-width="1.300"/></svg></button>
      <span class="ml-[8px] w-px h-full bg-[#a0a0a0]"></span>
      <button type="button" aria-label="增加段落间距" class="ml-[5px] w-[41px] flex justify-center"><svg width="21" height="20" viewBox="0 0 21 20" fill="none"><path d="M4 1v8M1 4.500 4 1l3 3.500M4 19v-7M1 15.500 4 19l3-3.500" stroke="#3a78b5" stroke-width="1.800"/><path d="M10 2h10M10 5h7M10 8h10M10 13h10M10 16h7M10 19h10" stroke="#666"/></svg></button>
      <button type="button" aria-label="减少段落间距" class="w-[41px] flex justify-center"><svg width="20" height="20" viewBox="0 0 20 20" fill="none"><path d="M4 1v6M1 4.500 4 8l3-3.500M4 19v-6M1 15 4 11.500 7 15" stroke="#3a78b5" stroke-width="1.800"/><path d="M9 2h10M9 5h8M9 8h10M9 12h10M9 15h8M9 18h10" stroke="#666"/></svg></button>
      <span class="ml-[6px] w-px h-full bg-[#a0a0a0]"></span>
      <button type="button" aria-label="减少缩进" class="ml-[5px] w-[41px] flex justify-center"><svg width="19" height="17"><use href="#outdent"/></svg></button>
      <button type="button" aria-label="增加缩进" class="w-[41px] flex justify-center"><svg width="19" height="17"><use href="#indent"/></svg></button>
    </div>
    <!-- Preview -->
    <div class="mt-[5px] ml-3 h-[235px] overflow-hidden bg-white border border-[#555] pt-3 pl-[40px]">
      <p class="text-[13px] leading-[17px] text-[#b9b9b9] whitespace-nowrap">前一段落前一段落前一段落前一段落前一段落前一段落前一段落前一段落前一段落前一段落前一<br>段落前一段落前一段落前一段落前一段落前一段落前一段落前一段落前一段落前一段落前一段落<br>前一段落前一段落前一段落前一段落</p>
      <p class="mt-20 pl-[314px] text-[28px] leading-10 font-bold whitespace-pre font-['Liberation_Serif','Noto_Sans_CJK_SC',serif]">1  导论</p>
      <p class="mt-[46px] pl-[130px] text-[13px] leading-[17px] text-[#b9b9b9] whitespace-nowrap">段落下一段落下一段落下一段落下一段落下一段落下一段落下一段落下一</p>
    </div>
    <!-- Description -->
    <div class="mt-[5px] ml-3 h-[86px] border border-[#abadb3] flex p-[3px] pt-0.5">
      <div class="flex-1 overflow-hidden pl-[163px] leading-5 whitespace-nowrap"><p>号, 加粗, 字距调整二号, 缩进:</p><p class="h-5"></p><p class="-ml-1">定义网格后不调整右缩进, 居中</p><p>行控制, 与下段同页, 段中不分页, 1 级, 不对齐到网格, 样式: 链接, 自动</p></div>
      <div class="w-[19px] flex flex-col items-center text-[#555]"><svg class="mt-2 rotate-180" width="10" height="7"><use href="#chev"/></svg><span class="mt-2 w-[19px] h-[22px] bg-[#cdcdcd]"></span><svg class="mt-auto mb-2" width="10" height="7"><use href="#chev"/></svg></div>
    </div>
    <div class="mt-[15px] pl-36 flex flex-col gap-[10px]">
      <label class="flex items-center"><input type="checkbox" class="ml-1.5 mr-1">自动更新(<u>U</u>)</label>
      <label class="flex items-center"><input type="radio" name="scope">基于该模板的新文档</label>
    </div>
    <div class="mt-auto mb-[11px] flex items-center h-[35px]">
      <button type="button" class="w-[99px] h-[34px] border border-[#005499] bg-[#cce4f7] flex items-center justify-center gap-1">格式(<u class="-mx-1">O</u>)<svg width="7" height="5"><use href="#caret"/></svg></button>
      <button class="ml-auto w-[99px] h-[35px] border border-[#adadad] bg-[#e1e1e1]">确定</button>
      <button type="button" class="ml-[13px] w-[99px] h-[35px] border border-[#adadad] bg-[#e1e1e1]">取消</button>
    </div>
  </div>
  <!-- Format menu -->
  <ul class="absolute left-2 top-[501px] w-[181px] h-[265px] bg-white border border-[#c6c6c6] pt-0.5 px-px text-[#666] leading-[25px]">
    <li class="h-[29px]"><button type="button" class="w-full h-7 pb-0.5 bg-[#d5e1f2] border border-[#a3bde3] pl-10 text-left">字体(<u>F</u>)...</button></li>
    <li class="h-[29px]"><button type="button" class="w-full h-7 pb-0.5 pl-[41px] text-left">段落(<u>P</u>)...</button></li>
    <li class="h-[29px]"><button type="button" class="w-full h-7 pb-0.5 pl-[41px] text-left">制表位(<u>T</u>)...</button></li>
    <li class="h-[29px]"><button type="button" class="w-full h-7 pb-0.5 pl-[41px] text-left">边框(<u>B</u>)...</button></li>
    <li class="h-[29px]"><button type="button" class="w-full h-7 pb-0.5 pl-[41px] text-left">语言(<u>L</u>)...</button></li>
    <li class="h-[29px]"><button type="button" class="w-full h-7 pb-0.5 pl-[41px] text-left">图文框(<u>M</u>)...</button></li>
    <li class="h-[29px]"><button type="button" class="w-full h-7 pb-0.5 pl-[41px] text-left">编号(<u>N</u>)...</button></li>
    <li class="h-[29px]"><button type="button" class="w-full h-7 pb-0.5 pl-[41px] text-left">快捷键(<u>K</u>)...</button></li>
    <li class="h-[29px]"><button type="button" class="w-full h-7 pb-0.5 pl-[41px] text-left">文字效果(<u>E</u>)...</button></li>
  </ul>
  <svg class="absolute left-[12px] top-[494px] pointer-events-none" width="124" height="42"><ellipse cx="62" cy="21" rx="60" ry="19" fill="none" stroke="#fc3b3b" stroke-width="2.500"/></svg>
</form>

<!-- Callout arrow -->
<svg class="absolute left-[960px] top-[130px] pointer-events-none" width="170" height="110" viewBox="0 0 170 110"><path d="M14 12.500 70 43 135 86l4-6 13 21-25-3 3-6-63-43z" fill="#fc3b3b"/></svg>

<!-- Level meter -->
<div class="absolute right-0.5 top-[69px] w-3 h-[74px] rounded-[5px] border-2 border-[#777] bg-[#606060] overflow-hidden flex flex-col shadow">
  <div class="h-2.5 bg-[#17284a]"></div><div class="mt-[39px] h-[18px] bg-[repeating-linear-gradient(#3fd060_0_3px,#2f6b3c_3px_4px)]"></div>
</div>

<div class="absolute right-3.5 bottom-1 text-[20px] leading-7 text-[#d5d5d5] [text-shadow:0_0_2px_#777,1px_1px_1px_#777]">CSDN @Redhur-</div>
</body>
</html>
